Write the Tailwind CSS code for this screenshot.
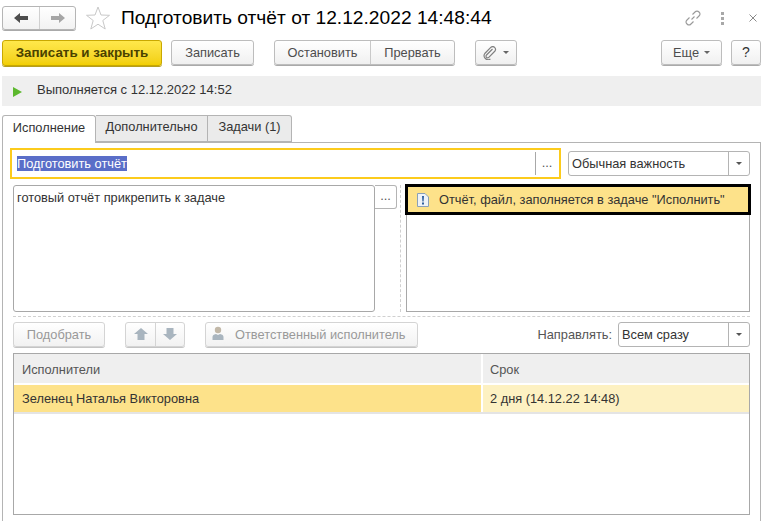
<!DOCTYPE html>
<html lang="ru">
<head>
  <meta charset="UTF-8" />
  <title>Подготовить отчёт</title>
  <script src="https://cdn.jsdelivr.net/npm/@tailwindcss/browser@4"></script>
</head>
<body class="bg-white font-['Liberation_Sans',Arial,sans-serif] text-[12.8px] text-[#333] w-[761px] h-[521px] overflow-hidden">

  <!-- Title row -->
  <div class="flex items-center h-[24px] mt-[6px] ml-[2px]">
    <div class="flex w-[74px] h-[24px] border border-[#b5b5b5] rounded-[3px] bg-gradient-to-b from-white to-[#f2f2f2] shadow-[0_1px_0_#aaa]">
      <div class="w-[37px] flex items-center justify-center border-r border-[#d0d0d0]">
        <svg width="14" height="10" viewBox="0 0 14 10"><path d="M0 5 L6 0 V3 H14 V7 H6 V10 Z" fill="#4d4d4d"/></svg>
      </div>
      <div class="flex-1 flex items-center justify-center">
        <svg width="14" height="10" viewBox="0 0 14 10"><path d="M14 5 L8 0 V3 H0 V7 H8 V10 Z" fill="#a6a6a6"/></svg>
      </div>
    </div>
    <svg class="ml-[10px]" width="24" height="24" viewBox="0 0 24 24"><path d="M12 1 L15 9 L23.5 9.3 L16.8 14.5 L19.2 23 L12 18.2 L4.8 23 L7.2 14.5 L0.5 9.3 L9 9 Z" fill="#fff" stroke="#c8c8c8" stroke-width="1"/></svg>
    <h1 class="ml-[11px] text-[19.2px] leading-[24px] text-black whitespace-nowrap">Подготовить отчёт от 12.12.2022 14:48:44</h1>
    <div class="ml-auto flex items-center">
      <svg width="16" height="16" viewBox="0 0 16 16" fill="none" stroke="#9a9a9a" stroke-width="1.1"><path d="M6.5 9.5 L9.5 6.5"/><path d="M7.5 4.5 L10 2 A2.6 2.6 0 0 1 14 6 L11.5 8.5"/><path d="M8.5 11.5 L6 14 A2.6 2.6 0 0 1 2 10 L4.5 7.5"/></svg>
      <div class="ml-[20px] flex flex-col gap-[2px] w-[3px]">
        <span class="w-[3px] h-[3px] bg-[#a8a8a8]"></span>
        <span class="w-[3px] h-[3px] bg-[#a8a8a8]"></span>
        <span class="w-[3px] h-[3px] bg-[#a8a8a8]"></span>
      </div>
      <svg class="ml-[25px] mr-[4px]" width="8" height="8" viewBox="0 0 8 8" stroke="#8a8a8a" stroke-width="1"><path d="M0.5 0.5 L7.5 7.5 M7.5 0.5 L0.5 7.5"/></svg>
    </div>
  </div>

  <!-- Command bar -->
  <div class="flex items-start h-[26px] mt-[10px] ml-[2px] text-[#4d4d4d]">
    <button class="w-[160px] h-[26px] border border-[#c9a800] rounded-[3px] bg-gradient-to-b from-[#ffe84a] to-[#f2cf00] font-bold text-[13.4px] text-[#4a4200] shadow-[0_1px_0_#b59e1e]">Записать и закрыть</button>
    <button class="ml-[9px] w-[83px] h-[25px] border border-[#bdbdbd] rounded-[3px] bg-gradient-to-b from-white to-[#f0f0f0] shadow-[0_1px_0_#aaa]">Записать</button>
    <div class="ml-[20px] flex h-[25px] w-[181px] border border-[#bdbdbd] rounded-[3px] bg-gradient-to-b from-white to-[#f0f0f0] shadow-[0_1px_0_#aaa]">
      <span class="w-[96px] flex items-center justify-center border-r border-[#c9c9c9]">Остановить</span>
      <span class="flex-1 flex items-center justify-center">Прервать</span>
    </div>
    <button class="ml-[20px] w-[42px] h-[25px] flex items-center justify-center gap-[6px] border border-[#bdbdbd] rounded-[3px] bg-gradient-to-b from-white to-[#f0f0f0] shadow-[0_1px_0_#aaa]">
      <svg width="14" height="14" viewBox="0 0 14 14" fill="none" stroke="#808080" stroke-width="1.2"><path d="M9.5 3 L3.5 9 A1.6 1.6 0 0 0 5.8 11.3 L12 5 A2.8 2.8 0 0 0 8 1.2 L1.8 7.5 A4 4 0 0 0 7.4 13"/></svg>
      <span class="w-0 h-0 border-x-[3px] border-x-transparent border-t-[3px] border-t-[#666]"></span>
    </button>
    <button class="ml-auto w-[61px] h-[25px] flex items-center justify-center gap-[5px] border border-[#bdbdbd] rounded-[3px] bg-gradient-to-b from-white to-[#f0f0f0] shadow-[0_1px_0_#aaa]">
      Еще
      <span class="w-0 h-0 border-x-[3px] border-x-transparent border-t-[3px] border-t-[#666]"></span>
    </button>
    <button class="ml-[9px] w-[30px] h-[25px] border border-[#bdbdbd] rounded-[3px] bg-gradient-to-b from-white to-[#f0f0f0] shadow-[0_1px_0_#aaa] text-[14px] text-[#333]">?</button>
  </div>

  <!-- Status bar -->
  <div class="flex items-center h-[30px] mt-[10px] ml-[2px] bg-[#efefef] pb-[2px]">
    <svg class="ml-[11px] mt-[3px]" width="9" height="10" viewBox="0 0 9 10"><path d="M0 0 L9 5 L0 10 Z" fill="#5cb82e"/></svg>
    <span class="ml-[15px] text-[13px]">Выполняется с 12.12.2022 14:52</span>
  </div>

  <!-- Tabs -->
  <div class="flex h-[28px] mt-[9px] ml-[2px] relative z-10">
    <div class="w-[94px] h-[28px] flex items-center justify-center bg-white border border-b-0 border-[#b4b4b4] rounded-t-[3px] pb-[3px]">Исполнение</div>
    <div class="w-[112px] h-[27px] flex items-center justify-center bg-[#ebebeb] border border-l-0 border-[#b4b4b4] pb-[3px]">Дополнительно</div>
    <div class="w-[84px] h-[27px] flex items-center justify-center bg-[#ebebeb] border border-l-0 border-[#b4b4b4] rounded-tr-[3px] pb-[3px]">Задачи (1)</div>
  </div>

  <!-- Tab panel -->
  <div class="ml-[2px] mt-[-1px] h-[400px] border border-[#b4b4b4] pt-[5px]">

    <!-- Subject and importance -->
    <div class="flex items-center ml-[7px]">
      <div class="flex items-center w-[551px] h-[31px] border-2 border-[#fccb1c]">
        <div class="flex-1 pl-[5px]"><span class="bg-[#5a6ec8] text-white inline-block h-[15px] leading-[15px]">Подготовить отчёт</span></div>
        <div class="w-[23px] h-[23px] mr-[1px] flex items-center justify-center border-l border-[#a8a8a8] text-[#555] pb-[2px]">...</div>
      </div>
      <div class="ml-[7px] w-[182px] h-[25px] flex border border-[#b4b4b4] rounded-[3px]">
        <div class="flex-1 pl-[3px] flex items-center">Обычная важность</div>
        <div class="w-[21px] flex items-center justify-center border-l border-[#b4b4b4]">
          <span class="w-0 h-0 border-x-[3px] border-x-transparent border-t-[3px] border-t-[#555]"></span>
        </div>
      </div>
    </div>

    <!-- Description and attachments -->
    <div class="flex items-start ml-[10px] mt-[6px] h-[127px]">
      <div class="w-[362px] h-[127px] border border-[#a8a8a8] rounded-[3px] px-[3px] py-[2px]">готовый отчёт прикрепить к задаче</div>
      <div class="w-[22px] h-[24px] flex items-center justify-center border border-l-0 border-[#b4b4b4] rounded-r-[3px] text-[#555] pb-[2px]">...</div>
      <div class="ml-[3px] w-0 h-[127px] border-l border-dashed border-[#d0d0d0]"></div>
      <div class="ml-[5px] w-[344px] h-[127px] border border-[#a8a8a8] relative">
        <div class="absolute left-[-2px] top-[-2px] w-[346px] h-[31px] border-[3px] border-black bg-[#fde28a] flex items-center">
          <svg class="ml-[9px]" width="12" height="14" viewBox="0 0 12 14"><path d="M0.5 0.5 H8 L11.5 4 V13.5 H0.5 Z" fill="#eef2f7" stroke="#8aa0b8"/><path d="M5 3 H7 L6.6 8.5 H5.4 Z M5 9.5 H7 V11.5 H5 Z" fill="#2f5f9e"/></svg>
          <span class="ml-[10px] pt-[1px] whitespace-nowrap">Отчёт, файл, заполняется в задаче "Исполнить"</span>
        </div>
      </div>
    </div>

    <div class="mt-[4px] ml-[10px] w-[737px] border-t border-dashed border-[#d0d0d0]"></div>

    <!-- Performers toolbar -->
    <div class="flex items-center ml-[10px] w-[737px] mt-[4px] h-[26px] text-[#999]">
      <div class="w-[92px] h-[25px] flex items-center justify-center border border-[#d4d4d4] rounded-[3px] bg-gradient-to-b from-white to-[#f2f2f2] shadow-[0_1px_0_#c4c4c4] pt-[1px]">Подобрать</div>
      <div class="ml-[20px] w-[60px] h-[25px] flex border border-[#d4d4d4] rounded-[3px] bg-gradient-to-b from-white to-[#f2f2f2] shadow-[0_1px_0_#c4c4c4]">
        <div class="w-[30px] flex items-center justify-center border-r border-[#d4d4d4]">
          <svg width="14" height="12" viewBox="0 0 14 12"><path d="M7 0 L14 6 H10.5 V12 H3.5 V6 H0 Z" fill="#a9b5bf"/></svg>
        </div>
        <div class="flex-1 flex items-center justify-center">
          <svg width="14" height="12" viewBox="0 0 14 12"><path d="M7 12 L14 6 H10.5 V0 H3.5 V6 H0 Z" fill="#a9b5bf"/></svg>
        </div>
      </div>
      <div class="ml-[20px] w-[213px] h-[25px] flex items-center border border-[#d4d4d4] rounded-[3px] bg-gradient-to-b from-white to-[#f2f2f2] shadow-[0_1px_0_#c4c4c4]">
        <svg class="ml-[6px] mb-[3px]" width="12" height="14" viewBox="0 0 12 14"><circle cx="6" cy="4" r="3.2" fill="#c2b8a8"/><path d="M0.5 14 V11 Q0.5 8.5 4 8 L6 9 L8 8 Q11.5 8.5 11.5 11 V14 Z" fill="#a9b5bf"/></svg>
        <span class="ml-[11px] pt-[1px] whitespace-nowrap">Ответственный исполнитель</span>
      </div>
      <span class="ml-auto pt-[1px] text-[#555]">Направлять:</span>
      <div class="ml-[6px] w-[132px] h-[25px] flex border border-[#b4b4b4] rounded-[3px] text-[#333]">
        <div class="flex-1 pl-[3px] pt-[1px] flex items-center">Всем сразу</div>
        <div class="w-[21px] flex items-center justify-center border-l border-[#b4b4b4]">
          <span class="w-0 h-0 border-x-[3px] border-x-transparent border-t-[3px] border-t-[#555]"></span>
        </div>
      </div>
    </div>

    <!-- Performers table -->
    <div class="ml-[10px] mt-[6px] w-[737px] h-[162px] border border-[#a8a8a8]">
      <div class="flex h-[31px] bg-[#efefef] border-b-2 border-white text-[#555]">
        <div class="w-[459px] pl-[8px] pt-[6px] border-r-2 border-white box-content">Исполнители</div>
        <div class="flex-1 pl-[7px] pt-[6px]">Срок</div>
      </div>
      <div class="flex h-[29px] border-b-2 border-[#e4e4e4]">
        <div class="w-[459px] pl-[8px] pt-[1px] flex items-center bg-[#fde28a] border-r-2 border-white box-content">Зеленец Наталья Викторовна</div>
        <div class="flex-1 pl-[7px] pt-[1px] flex items-center bg-[#fdf1c2]">2 дня (14.12.22 14:48)</div>
      </div>
    </div>
  </div>

</body>
</html>
